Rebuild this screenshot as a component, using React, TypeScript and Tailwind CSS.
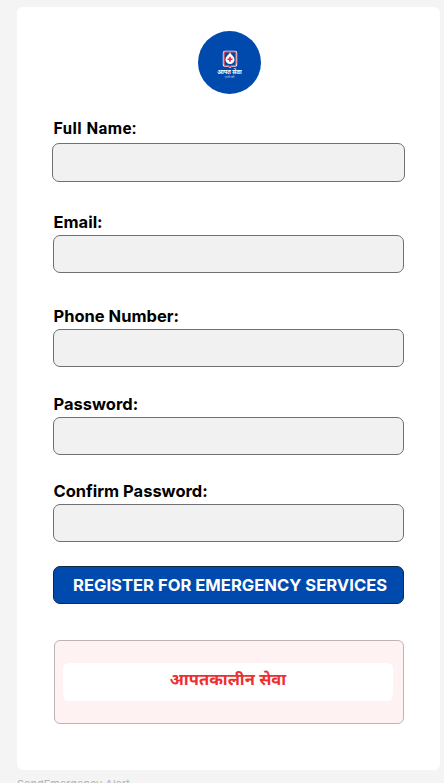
import React from "react";

type FieldProps = {
  id: string;
  label: string;
  type?: string;
  className: string;
  labelClass?: string;
  inputClass?: string;
};

function Field({
  id,
  label,
  type = "text",
  className,
  labelClass = "pl-[0.5px] font-['Inter',sans-serif] text-[16.5px] leading-5",
  inputClass = "h-[38px] w-[351px]",
}: FieldProps) {
  return (
    <div className={`flex flex-col justify-between ${className}`}>
      <label htmlFor={id} className={`block font-bold whitespace-nowrap text-black ${labelClass}`}>
        {label}
      </label>
      <input
        id={id}
        type={type}
        className={`block shrink-0 rounded-[7px] border border-[#707072] bg-[#f1f1f1] px-3 outline-none ${inputClass}`}
      />
    </div>
  );
}

function Logo() {
  return (
    <div className="ml-[181px] flex h-[63px] w-[63px] flex-col items-center rounded-full bg-[#004aad] pt-[19px] text-white">
      <svg className="shrink-0" width="16" height="19" viewBox="0 0 16 19" fill="none">
        <path d="M3 .8h10a2.200 2.200 0 0 1 2.200 2.200v11.500c0 1.500-.8 2.200-2.200 2.300h-3L8 18l-2-1.200H3c-1.400-.1-2.200-.8-2.200-2.300V3A2.200 2.200 0 0 1 3 .8Z" fill="#fff" />
        <path d="M3.500 1.900h9c.9 0 1.400.5 1.400 1.400v10.500c0 1.200-.5 1.700-1.400 1.800H9.800L8 16.700l-1.800-1.100H3.500c-.9-.1-1.400-.6-1.400-1.800V3.300c0-.9.5-1.400 1.400-1.400Z" fill="#004aad" stroke="#ee4b4f" strokeWidth="1.300" />
        <path d="M8 2.200C6.700 5 3.500 6.500 3.500 9.600a4.500 4.500 0 0 0 9 0C12.500 6.500 9.300 5 8 2.200Z" fill="#fff" />
        <path d="M7.200 6.800h1.600v1.700h1.700v1.600H8.800v1.700H7.200v-1.700H5.500V8.500h1.700V6.800Z" fill="#e5232b" />
      </svg>
      <span className="font-['Noto_Sans_Devanagari','Noto_Sans',sans-serif] text-[5.700px] leading-[7px] font-bold whitespace-nowrap">आपत सेवा</span>
      <span className="-mt-px font-['Noto_Sans_Devanagari','Noto_Sans',sans-serif] text-[3.400px] leading-[4px] whitespace-nowrap text-[#b8cdef]">हामी छौं</span>
    </div>
  );
}

export default function App() {
  return (
    <div className="h-[783px] w-[444px] overflow-hidden bg-[#f4f4f4] pt-[7px] pl-[17px] font-['Inter',sans-serif]">
      <main className="h-[762.5px] w-[422.5px] rounded-[6px] bg-white pt-6">
        <Logo />
        <form className="ml-9">
          <Field
            id="full-name"
            label="Full Name:"
            className="-ml-[1px] mt-6 h-[64px]"
            labelClass="pt-px pl-[1.500px] font-['Roboto',sans-serif] text-[16.500px] leading-5 tracking-[0.400px]"
            inputClass="h-[39px] w-[353px]"
          />
          <Field id="email" label="Email:" type="email" className="mt-[30px] h-[61px]" />
          <Field id="phone" label="Phone Number:" type="tel" className="mt-[33px] h-[61px]" />
          <Field id="password" label="Password:" type="password" className="mt-[26.500px] h-[61px]" />
          <Field id="confirm" label="Confirm Password:" type="password" className="mt-[26.500px] h-[61px]" />
          <button
            type="button"
            className="mt-6 flex h-[38px] w-[351px] items-center rounded-[7px] border border-[#12284a] bg-[#004aad] pl-[19px] text-[16.600px] font-bold whitespace-nowrap text-white"
          >
            REGISTER FOR EMERGENCY SERVICES
          </button>
          <section className="mt-[36px] ml-[1px] h-[84px] w-[349.500px] rounded-[6px] border border-[#bcb4b6] bg-[#fff2f2] px-2 pt-[22px]">
            <div className="flex h-[38px] w-[330px] items-center justify-center rounded-[6px] bg-white pb-px font-['Noto_Sans_Devanagari','Noto_Sans',sans-serif] text-[16.500px] font-bold text-[#ed2f2f]">
              आपतकालीन सेवा
            </div>
          </section>
        </form>
      </main>
      <p className="mt-[6px] text-[11px] leading-4 text-[#b5b5b5]">SendEmergency Alert</p>
    </div>
  );
}
